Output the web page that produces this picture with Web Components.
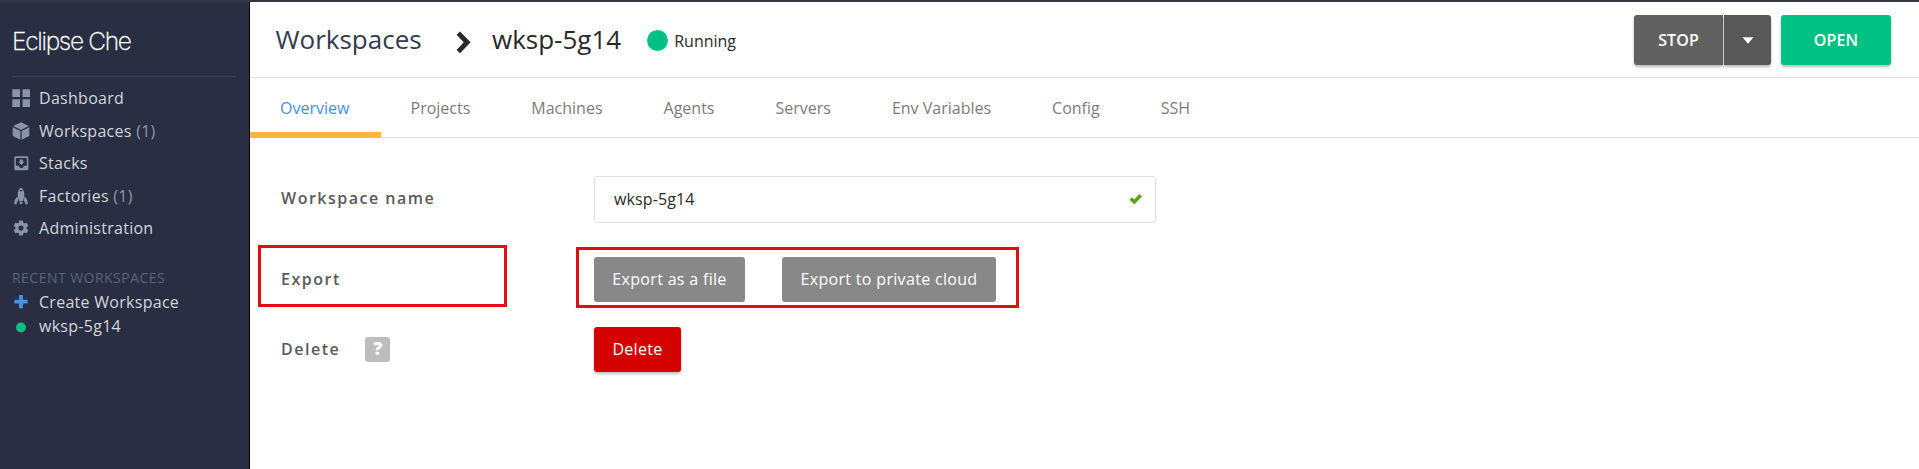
<!DOCTYPE html>
<html lang="en">
<head>
<meta charset="utf-8">
<title>Eclipse Che</title>
<style>
html,body{margin:0;height:100%;overflow:hidden;background:#fff;font-family:"Open Sans","Noto Sans",sans-serif;font-size:16px}
</style>
</head>
<body>
<che-app></che-app>
<script>
const define = (name, html, connected) => customElements.define(name, class extends HTMLElement {
  constructor() {
    super();
    const t = document.createElement('template');
    t.innerHTML = html;
    this.attachShadow({mode: 'open'}).append(t.content.cloneNode(true));
  }
  connectedCallback() { if (connected) connected(this); }
});

const ICONS = {
  dashboard: ['0 0 18 18', 18, '<path d="M.3.3H8V8H.3zM10.5.3H18V8h-7.500zM.3 10.300H8V18H.3zM10.500 10.300H18V18h-7.500z"/>'],
  cube: ['0 0 18 18', 18, '<path d="M9 .3 16.800 4.100 9 7.900 1.200 4.100zM.7 5.200 8.400 9v8.800L.7 13.900zM17.300 5.200 9.600 9v8.800l7.700-3.900z"/>'],
  stacks: ['0 0 24 24', 18.7, '<path d="M19 3H4.990c-1.110 0-1.980.9-1.980 2L3 19c0 1.100.88 2 1.990 2H19c1.100 0 2-.9 2-2V5c0-1.100-.9-2-2-2zm0 12h-4c0 1.660-1.350 3-3 3s-3-1.340-3-3H4.990V5H19v10zm-3-5h-2V7h-4v3H8l4 4 4-4z"/>'],
  rocket: ['0 0 18 18', 18, '<path fill-rule="evenodd" d="M9 .6c2.300 1.600 3.300 4 3.300 6.600 0 2.300-.6 4.800-1.500 6.700H7.200C6.300 12 5.700 9.500 5.700 7.200 5.700 4.600 6.700 2.200 9 .6zM7.500 4.300h3L9.900 3H8.100z"/><path d="M5.400 9.500c.2 1.500.6 2.900 1 4-1 .8-1.600 2-1.700 3.700H2.200c0-3.500 1-5.900 3.200-7.700zM12.600 9.500c-.2 1.500-.6 2.900-1 4 1 .8 1.600 2 1.700 3.700h2.500c0-3.500-1-5.900-3.200-7.700zM7.600 14.600h2.800v1.600L9 17.500l-1.400-1.300z"/>'],
  gear: ['0 0 24 24', 18, '<path d="M19.430 12.980c.04-.32.07-.64.07-.98s-.03-.66-.07-.98l2.110-1.650c.19-.15.24-.42.12-.64l-2-3.460c-.12-.22-.39-.3-.61-.22l-2.490 1c-.52-.4-1.080-.73-1.690-.98l-.38-2.650C14.460 2.180 14.250 2 14 2h-4c-.25 0-.46.18-.49.42l-.38 2.650c-.61.25-1.170.59-1.690.98l-2.490-1c-.23-.09-.49 0-.61.22l-2 3.460c-.13.22-.07.49.12.64l2.110 1.650c-.04.32-.07.65-.07.98s.03.66.07.98l-2.110 1.650c-.19.15-.24.42-.12.64l2 3.460c.12.22.39.3.61.22l2.490-1c.52.4 1.080.73 1.690.98l.38 2.650c.03.24.24.42.49.42h4c.25 0 .46-.18.49-.42l.38-2.650c.61-.25 1.170-.59 1.690-.98l2.490 1c.23.09.49 0 .61-.22l2-3.460c.12-.22.07-.49-.12-.64l-2.110-1.650zM12 15.500c-1.930 0-3.500-1.570-3.500-3.500s1.570-3.500 3.500-3.500 3.500 1.570 3.500 3.500-1.570 3.500-3.500 3.500z"/>'],
  plus: ['0 0 18 18', 18, '<path fill="#4a90e2" d="M7.100 2h3.800v4.700h4.700v3.800h-4.700v4.700H7.100v-4.700H2.400V6.700h4.700z"/>'],
  dot: ['0 0 18 18', 18, '<circle cx="9" cy="10.500" r="5" fill="#00c083"/>']
};
customElements.define('che-icon', class extends HTMLElement {
  constructor() { super(); this.attachShadow({mode: 'open'}); }
  connectedCallback() {
    const [box, size, art] = ICONS[this.getAttribute('name')];
    this.shadowRoot.innerHTML = `<style>:host{display:flex;width:18px;height:18px;align-items:center;justify-content:center;flex:none}svg{flex:none;fill:#8a94a6}</style><svg viewBox="${box}" width="${size}" height="${size}">${art}</svg>`;
  }
});

define('nav-item', `<style>
:host{display:flex;align-items:center;height:var(--row,32.500px);color:#d3d5db;letter-spacing:.28px;line-height:24px;white-space:pre}
che-icon{margin-right:9px}
::slotted(i){font-style:normal;color:#8f97a9}
</style><span><slot></slot></span>`, el => {
  const icon = document.createElement('che-icon');
  icon.setAttribute('name', el.getAttribute('icon'));
  el.shadowRoot.querySelector('span').before(icon);
});

define('che-sidebar', `<style>
:host{display:block;box-sizing:border-box;width:250px;background:#292e43;border-right:1px solid #000;padding:0 13px 0 12px;flex:none}
.logo{height:75px;box-sizing:border-box;padding-top:22px;border-bottom:1px solid #3b4063;margin-bottom:5px;color:#fff;font:200 24.500px/34px Inter,sans-serif;letter-spacing:-1.300px;-webkit-text-stroke:.3px #fff;white-space:nowrap}
.head{margin-top:22.500px;height:22.500px;line-height:22px;font-size:14px;letter-spacing:.47px;color:#5c6277;white-space:nowrap}
.recent{--row:24.500px}
</style>
<div class="logo">Eclipse Che</div>
<nav>
<nav-item icon="dashboard">Dashboard</nav-item>
<nav-item icon="cube">Workspaces <i>(1)</i></nav-item>
<nav-item icon="stacks">Stacks</nav-item>
<nav-item icon="rocket">Factories <i>(1)</i></nav-item>
<nav-item icon="gear">Administration</nav-item>
</nav>
<div class="head">RECENT WORKSPACES</div>
<div class="recent"><nav-item icon="plus">Create Workspace</nav-item><nav-item icon="dot">wksp-5g14</nav-item></div>`);

define('che-button', `<style>
:host{display:flex;box-sizing:border-box;align-items:center;justify-content:center;height:45px;padding-bottom:2px;border-radius:3px;color:#fff;background:#888;letter-spacing:.32px;line-height:24px;white-space:nowrap}
</style><slot></slot>`);

define('che-header', `<style>
:host{display:flex;box-sizing:border-box;height:76px;padding:0 28px 0 25.500px;border-bottom:1px solid #dfe1e1;color:#292929}
.t{font-size:26px;line-height:36px;margin-top:19px;white-space:nowrap}
.a{color:#343b50;width:180px}
.chev{margin:29px 21.500px 0 0;width:15px;height:23px;flex:none}
.dot{width:21px;height:21px;border-radius:50%;background:#00c083;margin:28px 6px 0 26px;flex:none}
.s{line-height:24px;margin-top:27px}
.sp{flex:1}
che-button{height:50px;margin-top:13px;padding:0;font-weight:600;letter-spacing:.1px;box-shadow:0 2px 3px rgba(0,0,0,.28)}
.stop{background:#616161;width:89px;border-radius:3px 0 0 3px}
.drop{background:#585858;width:47px;margin-left:1px;border-radius:0 3px 3px 0}
.open{background:#00c083;width:110px;margin-left:10px}
</style>
<div class="t a">Workspaces</div>
<svg class="chev" viewBox="0 0 15 23"><path d="M.6 3.700 4 .5l10.600 10.700L4 22.200.6 19l7.100-7.700z" fill="#292929"/></svg>
<div class="t">wksp-5g14</div>
<div class="dot"></div><div class="s">Running</div>
<div class="sp"></div>
<che-button class="stop">STOP</che-button><che-button class="drop"><svg width="12" height="7" viewBox="0 0 12 7"><path d="M.5.300h11L6 6.700z" fill="#fff"/></svg></che-button><che-button class="open">OPEN</che-button>`);

define('che-tab', `<style>
:host{display:block;box-sizing:border-box;height:60px;padding:18px 30.500px 0;line-height:24px;color:#7c7c7c;white-space:nowrap;border-bottom:6px solid transparent}
:host([active]){color:#4a90e2;border-color:#fcb63d;width:131px;padding-left:30px;margin-right:-1px}
</style><slot></slot>`);

define('che-tabs', `<style>
:host{display:flex;height:60px;box-sizing:border-box;border-bottom:1px solid #e0e2e2}
</style>
<che-tab active>Overview</che-tab><che-tab>Projects</che-tab><che-tab>Machines</che-tab><che-tab>Agents</che-tab><che-tab>Servers</che-tab><che-tab>Env Variables</che-tab><che-tab>Config</che-tab><che-tab>SSH</che-tab>`);

define('form-row', `<style>
:host{display:flex;align-items:center;position:relative;padding-left:31px}
.l{width:313px;display:flex;align-items:center;font-weight:600;color:#5a5a5a;letter-spacing:1.500px;line-height:24px;padding-bottom:var(--lift,2px);white-space:nowrap}
</style><div class="l"><slot name="label"></slot></div><slot></slot>`);

define('text-field', `<style>
:host{display:flex;box-sizing:border-box;width:562px;height:47px;align-items:center;justify-content:space-between;border:1px solid #e0e0e0;border-radius:3px;padding:0 12px 2px 19px;color:#292929;letter-spacing:.12px;line-height:24px}
</style><slot></slot><svg width="14" height="12" viewBox="0 0 14 12"><path d="M1.800 5.500 5.300 9 11.700 2.200" fill="none" stroke="#58a618" stroke-width="3.600"/></svg>`);

define('help-badge', `<style>
:host{display:flex;width:25px;height:25px;border-radius:3px;background:#bdbdbd;color:#fff;font:800 18px/23px "Open Sans",sans-serif;letter-spacing:0;justify-content:center}
</style><slot></slot>`);

define('che-overview', `<style>
:host{display:block;padding-top:38px}
.name{--lift:4px}
.exp{margin-top:34px}.del{margin-top:25px}
help-badge{margin:2px 0 0 25px}
.a{width:151px}
.b{width:214px;margin-left:37px}
.red{width:87px;background:#d50000;box-shadow:0 2px 3px rgba(0,0,0,.25)}
.mark{position:absolute;box-sizing:border-box;border:3px solid #e20d10}
.m1{left:8px;top:-12px;width:249px;height:62px}
.m2{left:326px;top:-10px;width:443px;height:61px}
</style>
<form-row class="name"><span slot="label">Workspace name</span><text-field>wksp-5g14</text-field></form-row>
<form-row class="exp"><span slot="label">Export</span><che-button class="a">Export as a file</che-button><che-button class="b">Export to private cloud</che-button><div class="mark m1"></div><div class="mark m2"></div></form-row>
<form-row class="del"><span slot="label">Delete</span><help-badge slot="label">?</help-badge><che-button class="red">Delete</che-button></form-row>`);

define('che-app', `<style>
:host{display:flex;flex-direction:column;height:469px}
.top{height:2px;background:#363746;flex:none}
.body{display:flex;flex:1}
main{flex:1}
</style>
<div class="top"></div>
<div class="body"><che-sidebar></che-sidebar><main><che-header></che-header><che-tabs></che-tabs><che-overview></che-overview></main></div>`);
</script>
</body>
</html>
